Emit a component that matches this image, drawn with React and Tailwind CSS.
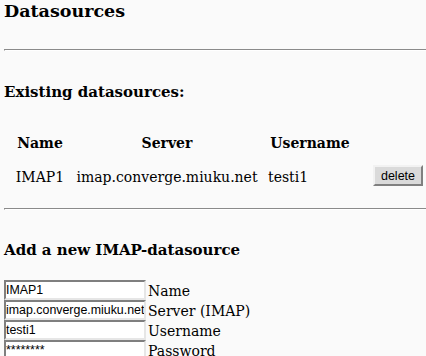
import React from "react";

const fields = [
  { value: "IMAP1", label: "Name" },
  { value: "imap.converge.miuku.net", label: "Server (IMAP)" },
  { value: "testi1", label: "Username" },
  { value: "********", label: "Password" },
];

function Hr({ className = "" }) {
  return (
    <div
      className={
        "h-[2px] border-t border-l border-b border-t-[#8a8a8a] border-l-[#8a8a8a] border-b-[#ffffff] " +
        className
      }
    />
  );
}

export default function App() {
  return (
    <div className="min-h-screen overflow-hidden bg-[#fafafa] pl-[4px] text-black font-['DejaVu_Serif',serif]">
      <h1 className="h-[21px] pt-[1px] text-[17.5px] leading-[20px] font-bold">Datasources</h1>
      <Hr className="mt-[28px]" />
      <h2 className="mt-[32px] h-[18px] text-[15px] leading-[18px] font-bold">Existing datasources:</h2>

      <div className="ml-[7px] mt-[33px] grid h-[18px] grid-cols-[58px_196px_90px_auto] text-[14px] leading-[18px] font-bold">
        <div className="text-center">Name</div>
        <div className="text-center">Server</div>
        <div className="text-center">Username</div>
        <div />
      </div>
      <div className="ml-[7px] mt-[13px] grid h-[21px] grid-cols-[58px_196px_90px_auto] text-[14px] leading-[18px]">
        <div className="pt-[3px] text-center">IMAP1</div>
        <div className="pt-[3px] text-center">imap.converge.miuku.net</div>
        <div className="pl-[3px] pt-[3px]">testi1</div>
        <div className="pl-[18px]">
          <button className="flex h-[21px] w-[50px] items-center justify-center border-2 border-t-[#f2f2f2] border-l-[#f2f2f2] border-r-[#808080] border-b-[#808080] bg-[#dadada] text-[12.5px] leading-[14px] font-['Liberation_Sans',sans-serif]">
            delete
          </button>
        </div>
      </div>

      <Hr className="mt-[22px]" />
      <h3 className="mt-[31px] h-[18px] text-[15px] leading-[18px] font-bold">Add a new IMAP-datasource</h3>

      <div className="mt-[21px] flex flex-col">
        {fields.map((f) => (
          <div key={f.label} className="flex h-[20px] items-start">
            <input
              readOnly
              value={f.value}
              className="h-[20px] w-[142px] border-2 border-t-[#7f7f7f] border-l-[#7f7f7f] border-r-[#e6e6e6] border-b-[#e6e6e6] bg-white p-0 text-[12.4px] leading-[16px] text-black outline-none font-['Liberation_Sans',sans-serif]"
            />
            <span className="ml-[2px] pt-[1px] text-[14px] leading-[20px]">{f.label}</span>
          </div>
        ))}
      </div>
    </div>
  );
}
